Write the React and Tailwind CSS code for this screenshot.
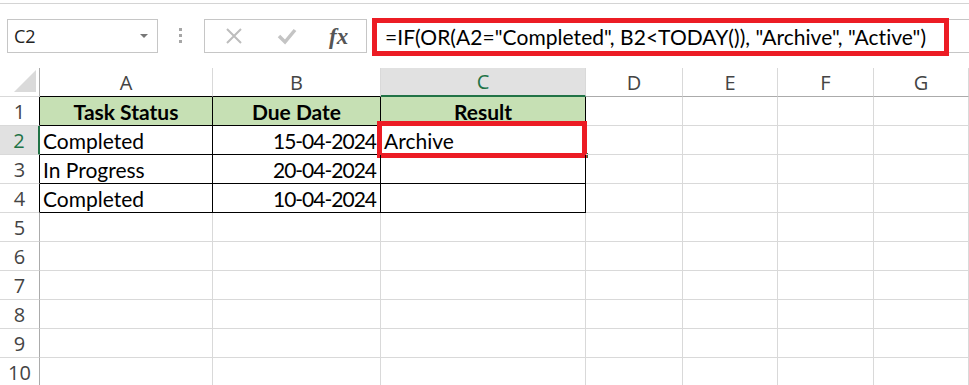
import React from 'react'

const cellFont = { fontFamily: 'Lato, "Open Sans", sans-serif' }
const uiFont = { fontFamily: '"Open Sans", "Noto Sans", sans-serif' }

const cols = ['A', 'B', 'C', 'D', 'E', 'F', 'G']

const rows = [
  ['Completed', '15-04-2024', 'Archive'],
  ['In Progress', '20-04-2024', ''],
  ['Completed', '10-04-2024', ''],
]

function Toolbar() {
  return (
    <div className="flex items-start pl-[7px] mt-[15px] h-[34px]">
      <div className="w-[151px] h-[34px] border border-[#c6c6c6] flex items-center justify-between pl-[6px] pr-[9px]">
        <span className="text-[18px] text-[#222] leading-none" style={uiFont}>C2</span>
        <span className="w-0 h-0 border-l-[4px] border-r-[4px] border-t-[4px] border-l-transparent border-r-transparent border-t-[#777]" />
      </div>
      <div className="ml-[21px] mt-[9px] flex flex-col gap-[3px]">
        <span className="w-[3px] h-[3px] bg-[#a6a6a6]" />
        <span className="w-[3px] h-[3px] bg-[#a6a6a6]" />
        <span className="w-[3px] h-[3px] bg-[#a6a6a6]" />
      </div>
      <div className="ml-[22px] w-[163px] h-[34px] border border-[#c6c6c6] flex items-center">
        <svg width="18" height="18" viewBox="0 0 18 18" className="ml-[20px]">
          <path d="M2 2 L16 16 M16 2 L2 16" stroke="#bdbdbd" strokeWidth="2" />
        </svg>
        <svg width="20" height="18" viewBox="0 0 20 18" className="ml-[34px]">
          <path d="M2 9 L8 15 L18 3" stroke="#c4c4c4" strokeWidth="3.5" fill="none" />
        </svg>
        <span className="ml-[32px] text-[23px] italic font-bold text-[#555] leading-none" style={{ fontFamily: '"Liberation Serif", serif' }}>fx</span>
      </div>
      <div className="relative ml-[5px] flex-1 h-[34px] border border-r-0 border-[#c6c6c6] flex items-center pl-[12px]">
        <span className="text-[21px] tracking-[0.05px] text-black leading-none whitespace-nowrap" style={cellFont}>
          =IF(OR(A2="Completed", B2&lt;TODAY()), "Archive", "Active")
        </span>
        <div className="absolute left-[-1px] top-[-2px] w-[577px] h-[38px] border-[5px] border-[#ec1c24]" />
      </div>
    </div>
  )
}

function ColHeader({ label, active, tableCol }) {
  const bottom = active ? 'border-b-2 border-b-[#217346]' : tableCol ? 'border-b border-b-black' : 'border-b border-b-[#ababab]'
  return (
    <div className={`h-[29px] border-r border-r-[#d9d9d9] ${bottom} flex items-end justify-center ${active ? 'bg-[#e1e1e1] text-[#217346]' : 'bg-white text-[#444]'}`}>
      <span className="text-[20px] leading-none pb-[3px]" style={uiFont}>{label}</span>
    </div>
  )
}

function RowHeader({ n, active, inTable }) {
  const right = active ? 'border-r-2 border-r-[#217346]' : inTable ? 'border-r border-r-black' : 'border-r border-r-[#ababab]'
  return (
    <div className={`h-[29px] ${right} border-b border-b-[#d9d9d9] flex items-end justify-center ${active ? 'bg-[#e1e1e1] text-[#217346]' : 'bg-white text-[#444]'}`}>
      <span className="text-[20px] leading-none pb-[3px]" style={uiFont}>{n}</span>
    </div>
  )
}

function Cell({ children, table, align = 'left', head, tight, className = '' }) {
  const border = table ? 'border-r border-b border-black' : 'border-r border-b border-[#d9d9d9]'
  const justify = align === 'right' ? 'justify-end pr-[4px]' : align === 'center' ? 'justify-center' : 'justify-start pl-[3px]'
  return (
    <div className={`relative h-[29px] ${border} flex items-end ${justify} ${head ? 'bg-[#c6e0b4] font-bold' : ''} ${className}`}>
      <span className={`text-[21px] leading-none pb-[3px] text-black whitespace-nowrap ${tight ? 'tracking-[-1px]' : ''}`} style={cellFont}>{children}</span>
    </div>
  )
}

export default function App() {
  const blankRows = [5, 6, 7, 8, 9, 10]
  return (
    <div className="w-[969px] h-[385px] overflow-hidden bg-white">
      <div className="h-[4px] border-b border-[#d4d4d4]" />
      <Toolbar />
      <div className="mt-[15px] grid grid-cols-[40px_173px_168px_205px_97px_95px_96px_1fr]">
        <div className="relative h-[29px] border-r border-r-[#ababab] border-b border-b-[#d9d9d9]">
          <svg width="22" height="22" className="absolute right-[3px] bottom-[4px]"><polygon points="22,0 22,22 0,22" fill="#dadada" /></svg>
        </div>
        {cols.map((c, i) => (
          <ColHeader key={c} label={c} active={c === 'C'} tableCol={i < 3} />
        ))}

        <RowHeader n={1} inTable />
        <Cell table head align="center">Task Status</Cell>
        <Cell table head align="center">Due Date</Cell>
        <Cell table head align="center">Result</Cell>
        <Cell /><Cell /><Cell /><Cell />

        {rows.map((r, i) => (
          <React.Fragment key={i}>
            <RowHeader n={i + 2} active={i === 0} inTable />
            <Cell table>{r[0]}</Cell>
            <Cell table align="right" tight>{r[1]}</Cell>
            <Cell table className={i === 0 ? 'pl-[1px]' : ''}>
              {r[2]}
              {i === 0 && (
                <>
                  <span className="absolute right-[-2px] top-[-1px] w-[2px] h-[30px] bg-[#217346]" />
                  <span className="absolute right-[-3px] bottom-[-4px] w-[5px] h-[5px] bg-[#217346]" />
                  <span className="absolute left-[-4px] top-[-5px] w-[210px] h-[37px] border-[5px] border-[#ec1c24]" />
                </>
              )}
            </Cell>
            <Cell /><Cell /><Cell /><Cell />
          </React.Fragment>
        ))}

        {blankRows.map((n) => (
          <React.Fragment key={n}>
            <RowHeader n={n} />
            <Cell /><Cell /><Cell /><Cell /><Cell /><Cell /><Cell />
          </React.Fragment>
        ))}
      </div>
    </div>
  )
}
